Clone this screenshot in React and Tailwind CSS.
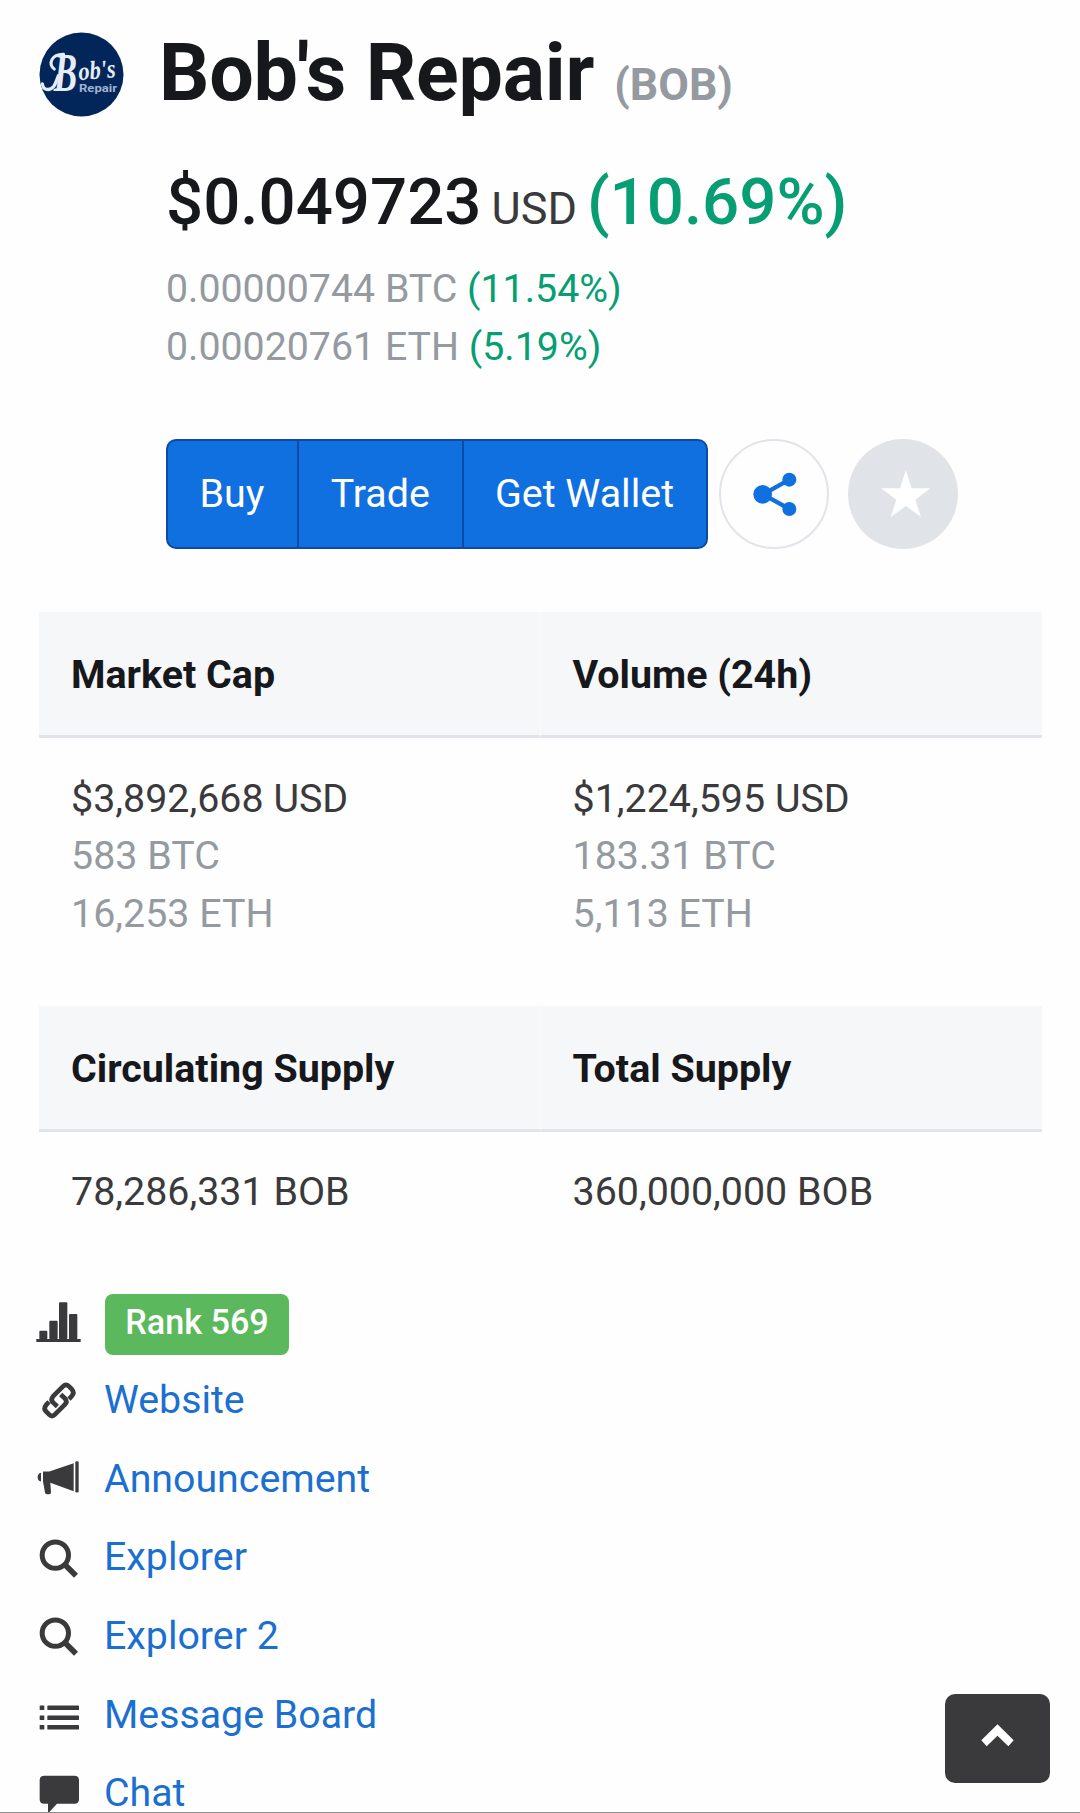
import React from "react";

function Logo() {
  return (
    <svg className="h-[85px] w-[85px] shrink-0" viewBox="58 64.5 255 255">
      <defs>
        <clipPath id="disc">
          <circle cx="185.5" cy="192" r="126" />
        </clipPath>
      </defs>
      <circle cx="185.5" cy="192" r="126" fill="#03265a" />
      <g clipPath="url(#disc)" fill="#e6edf6">
        <path d="M104 176 C84 160 96 130 132 131" fill="none" stroke="#e6edf6" strokeWidth="9" strokeLinecap="round" />
        <path d="M68 220 C70 240 90 242 102 228 C108 220 112 206 116 196" fill="none" stroke="#e6edf6" strokeWidth="10" strokeLinecap="round" />
        <text x="102" y="241" fontFamily="Liberation Serif, serif" fontStyle="italic" fontWeight="700" fontSize="162" textLength="70" lengthAdjust="spacingAndGlyphs">B</text>
        <text x="178" y="209" transform="rotate(-5 178 209)" fontFamily="Liberation Serif, serif" fontStyle="italic" fontWeight="700" fontSize="78" textLength="112" lengthAdjust="spacingAndGlyphs">ob's</text>
        <text x="178" y="244" fontFamily="Roboto, sans-serif" fontWeight="700" fontSize="32" fill="#9fb4d0" textLength="114" lengthAdjust="spacingAndGlyphs">Repair</text>
      </g>
    </svg>
  );
}

function StatTable({ columns, className }) {
  return (
    <div className={"grid grid-cols-2 " + className}>
      {columns.map((col, i) => (
        <div key={col.title}>
          <div
            className={
              "h-[126px] border-b-[3px] border-[#e1e4e9] bg-[#f5f7f9] pt-[34px] pl-8 text-[39.4px] leading-[58px] font-bold text-[#17181b] " +
              (i === 0 ? "border-r border-r-[#f8fafb]" : "")
            }
          >
            {col.title}
          </div>
          <div className="pt-[31.5px] pl-8 text-[39.4px]">
            {col.values.map((v, j) => (
              <div key={v} className={j === 0 ? "text-[#3a3a3c]" : "text-[#949aa0]"}>{v}</div>
            ))}
          </div>
        </div>
      ))}
    </div>
  );
}

const iconClass = "h-[78px] w-12 shrink-0";

function LinkIcon() {
  return (
    <svg className={iconClass} viewBox="48 270.6 144 234" fill="none" stroke="#3a3a3c" strokeWidth="14">
      <path d="M147 388 L156 378 Q164 368 156 359 L147 350 Q138 341 129 350 L99 380 Q91 389 99 398 L112 410" />
      <path d="M87 396 L78 406 Q70 416 78 425 L87 434 Q96 443 105 434 L135 404 Q143 395 135 386 L122 374" />
    </svg>
  );
}

function MegaphoneIcon() {
  return (
    <svg className={iconClass} viewBox="48 -3.6 144 234" fill="#3a3a3c">
      <path d="M63 98 V124 Q53 122 53 111 Q53 100 63 98 Z" />
      <path d="M69 94 H88 L161 69 V153 L91 128 L93 157 Q93 162 88 162 H80 Q76 162 75 157 L69 124 Z" />
      <rect x="166" y="63" width="10" height="94" rx="4" />
    </svg>
  );
}

function SearchIcon() {
  return (
    <svg className={iconClass} viewBox="48 232 144 234" fill="none" stroke="#3a3a3c">
      <circle cx="106" cy="343.5" r="39.5" strokeWidth="15" />
      <path d="M132 369 L168 405" strokeWidth="17" />
    </svg>
  );
}

function ListIcon() {
  return (
    <svg className={iconClass} viewBox="48 193.8 144 234" fill="#3a3a3c">
      {[285, 315, 343.5].map((y) => (
        <g key={y}>
          <rect x="59" y={y} width="14" height="14" rx="2" />
          <rect x="82" y={y} width="95" height="14" rx="2" />
        </g>
      ))}
    </svg>
  );
}

function ChatIcon() {
  return (
    <svg className={iconClass} viewBox="48 429.6 144 234" fill="#3a3a3c">
      <path d="M73 498 H163 Q177 498 177 512 V568 Q177 582 163 582 H111 L84 611 V582 H73 Q59 582 59 568 V512 Q59 498 73 498 Z" />
    </svg>
  );
}

const links = [
  ["Website", LinkIcon],
  ["Announcement", MegaphoneIcon],
  ["Explorer", SearchIcon],
  ["Explorer 2", SearchIcon],
  ["Message Board", ListIcon],
  ["Chat", ChatIcon],
];

export default function App() {
  return (
    <div className="relative h-[1813px] w-[1080px] overflow-hidden bg-[#fefefe] px-[39px] pt-[25px] font-['Roboto',sans-serif] text-[39.4px] leading-[57.6px] text-[#3a3a3c]">
      <header className="flex h-24 items-start">
        <div className="pt-[6.5px]">
          <Logo />
        </div>
        <h1 className="ml-[35px] text-[79px] leading-[96px] font-bold tracking-[-0.2px] whitespace-nowrap text-[#17181b]">
          Bob's Repair
        </h1>
        <span className="ml-[20px] pt-[11.5px] text-[44.5px] leading-[96px] font-bold text-[#949aa0]">(BOB)</span>
      </header>

      <section className="mt-[40.5px] pl-[127px]">
        <div className="flex h-20 items-baseline leading-[80px] whitespace-nowrap">
          <span className="text-[65.4px] font-medium text-[#17181b]">$0.049723</span>
          <span className="ml-[10px] text-[45px]">USD</span>
          <span className="ml-[10px] text-[65.4px] font-medium text-[#069e72]">(10.69%)</span>
        </div>
        <div className="mt-[18px] text-[39.3px] leading-[58px] text-[#949aa0]">
          <div>
            0.00000744 BTC <span className="text-[#069e72]">(11.54%)</span>
          </div>
          <div>
            0.00020761 ETH <span className="text-[#069e72]">(5.19%)</span>
          </div>
        </div>
      </section>

      <div className="mt-[63.5px] flex h-[110px] items-center pl-[126.500px]">
        <div className="flex h-[110px] w-[542.5px] overflow-hidden rounded-[10px] border-2 border-[#0c4aa6] bg-[#1070e0] text-white">
          <button className="w-[131px] border-r-2 border-[#0c4aa6]">Buy</button>
          <button className="w-[165.5px] border-r-2 border-[#0c4aa6]">Trade</button>
          <button className="flex-1 pr-px">Get Wallet</button>
        </div>
        <button className="ml-[11px] h-[110px] w-[110px] rounded-full border-2 border-[#e1e4e9]">
          <svg className="h-[106px] w-[106px]" viewBox="484 63 318 318" fill="#1070e0" stroke="#1070e0">
            <path d="M689 179 L610 223 L689 267" fill="none" strokeWidth="13" />
            <circle cx="609" cy="223" r="28" stroke="none" />
            <circle cx="689" cy="179" r="21" stroke="none" />
            <circle cx="689" cy="267" r="21" stroke="none" />
          </svg>
        </button>
        <button className="ml-[19px] h-[110px] w-[110px] rounded-full bg-[#e0e3e8]">
          <svg className="h-[110px] w-[110px]" viewBox="864 57 330 330" fill="#fff">
            <path d="M1037.500 151 L1055 205 H1111 L1066 239 L1083 291 L1037.500 258 L992 291 L1009 239 L963 205 H1020 Z" />
          </svg>
        </button>
      </div>

      <StatTable
        className="mt-[63px] w-[1003px]"
        columns={[
          { title: "Market Cap", values: ["$3,892,668 USD", "583 BTC", "16,253 ETH"] },
          { title: "Volume (24h)", values: ["$1,224,595 USD", "183.31 BTC", "5,113 ETH"] },
        ]}
      />
      <StatTable
        className="mt-[63.5px] w-[1003px]"
        columns={[
          { title: "Circulating Supply", values: ["78,286,331 BOB"] },
          { title: "Total Supply", values: ["360,000,000 BOB"] },
        ]}
      />

      <ul className="-ml-[3px] mt-[73.500px]">
        <li className="flex h-[66px] items-start">
          <svg className="h-[61px] w-12 shrink-0" viewBox="48 72 144 183" fill="#3a3a3c">
            <rect x="49" y="207" width="133" height="9" />
            <rect x="58" y="182" width="24" height="26" rx="3" />
            <rect x="88" y="152" width="25" height="56" rx="3" />
            <rect x="117" y="97" width="25" height="111" rx="3" />
            <rect x="147" y="132" width="25" height="76" rx="3" />
          </svg>
          <span className="ml-[21px] h-[61px] w-[184px] rounded-[8px] bg-[#5cb85c] text-center text-[34.2px] leading-[57px] font-medium text-white">
            Rank 569
          </span>
        </li>
        {links.map(([label, Icon]) => (
          <li key={label} className="flex h-[78.6px] items-start">
            <Icon />
            <a className="ml-[20px] pt-[0.8px] text-[39.3px] leading-[78.6px] text-[#1b6fd0]">{label}</a>
          </li>
        ))}
      </ul>

      <button className="absolute top-[1694px] left-[945px] h-[89px] w-[105px] rounded-[10px] bg-[#3a3a3c]">
        <svg className="h-[89px] w-[105px]" viewBox="135 102 315 267" fill="#fff">
          <path d="M292.500 193 L341 241 L325 259 L292.500 227 L260 259 L244 241 Z" />
        </svg>
      </button>
      <div className="absolute bottom-0 left-0 h-px w-full bg-[#8f8f8f]" />
    </div>
  );
}
